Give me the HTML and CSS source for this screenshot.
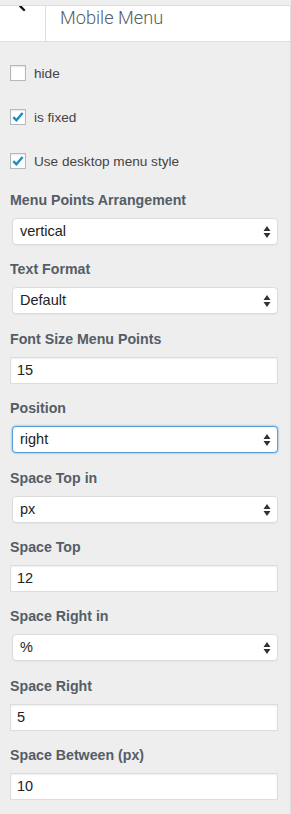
FILE: index.html
```html
<!DOCTYPE html>
<html>

<head>
    <meta charset="UTF-8">
    <title>Mobile Menu</title>
    <link rel="stylesheet" href="styles.css">
</head>

<body>
    <div class="panel">
        <div class="panel-head">
            <div class="back">
                <svg width="45" height="35" viewBox="0 0 45 35">
                    <path d="M20.5 0.5 L24 4" stroke="#111" stroke-width="2.4" stroke-linecap="round" fill="none" />
                </svg>
            </div>
            <div class="title">Mobile Menu</div>
        </div>

        <div class="controls">
            <label class="check-row">
                <span class="box"></span>
                hide
            </label>
            <label class="check-row">
                <span class="box">
                    <svg width="14" height="14" viewBox="0 0 14 14">
                        <path d="M2.3 7.2 L5.4 10.3 L11.6 3" stroke="#1e8cbe" stroke-width="2.4" fill="none" />
                    </svg>
                </span>
                is fixed
            </label>
            <label class="check-row">
                <span class="box">
                    <svg width="14" height="14" viewBox="0 0 14 14">
                        <path d="M2.3 7.2 L5.4 10.3 L11.6 3" stroke="#1e8cbe" stroke-width="2.4" fill="none" />
                    </svg>
                </span>
                Use desktop menu style
            </label>

            <div class="fields">
                <div class="field">
                    <span class="field-label">Menu Points Arrangement</span>
                    <div class="select">vertical<svg class="arrows" width="8" height="14" viewBox="0 0 8 14"><path d="M4 1 L7.5 6 L0.5 6 Z M4 13 L7.5 8 L0.5 8 Z" fill="#333" /></svg></div>
                </div>
                <div class="field">
                    <span class="field-label">Text Format</span>
                    <div class="select">Default<svg class="arrows" width="8" height="14" viewBox="0 0 8 14"><path d="M4 1 L7.5 6 L0.5 6 Z M4 13 L7.5 8 L0.5 8 Z" fill="#333" /></svg></div>
                </div>
                <div class="field">
                    <span class="field-label">Font Size Menu Points</span>
                    <div class="input">15</div>
                </div>
                <div class="field">
                    <span class="field-label">Position</span>
                    <div class="select focus">right<svg class="arrows" width="8" height="14" viewBox="0 0 8 14"><path d="M4 1 L7.5 6 L0.5 6 Z M4 13 L7.5 8 L0.5 8 Z" fill="#333" /></svg></div>
                </div>
                <div class="field">
                    <span class="field-label">Space Top in</span>
                    <div class="select">px<svg class="arrows" width="8" height="14" viewBox="0 0 8 14"><path d="M4 1 L7.5 6 L0.5 6 Z M4 13 L7.5 8 L0.5 8 Z" fill="#333" /></svg></div>
                </div>
                <div class="field">
                    <span class="field-label">Space Top</span>
                    <div class="input">12</div>
                </div>
                <div class="field">
                    <span class="field-label">Space Right in</span>
                    <div class="select">%<svg class="arrows" width="8" height="14" viewBox="0 0 8 14"><path d="M4 1 L7.5 6 L0.5 6 Z M4 13 L7.5 8 L0.5 8 Z" fill="#333" /></svg></div>
                </div>
                <div class="field">
                    <span class="field-label">Space Right</span>
                    <div class="input">5</div>
                </div>
                <div class="field">
                    <span class="field-label">Space Between (px)</span>
                    <div class="input">10</div>
                </div>
            </div>
        </div>
    </div>
</body>

</html>
```

FILE: styles.css
```css
html,
body {
    margin: 0;
    background-color: #eee;
}

body {
    font-family: "Liberation Sans", Arial, sans-serif;
    font-size: 13.6px;
    color: #555d66;
}

.panel {
    width: 290px;
    min-height: 814px;
    border-right: 1px solid #ddd;
}

.panel-head {
    display: flex;
    margin-top: 5px;
    height: 35px;
    background-color: #fff;
    border-top: 1px solid #ddd;
    border-bottom: 1px solid #ddd;
}

.back {
    width: 45px;
    border-right: 1px solid #ddd;
}

.back svg {
    display: block;
}

.title {
    padding-left: 14px;
    font-family: Roboto, "Liberation Sans", sans-serif;
    font-size: 18.2px;
    font-weight: 300;
    line-height: 20px;
    padding-top: 2px;
    color: #555d66;
}

.controls {
    padding: 23px 12px 0 10px;
}

.check-row {
    display: flex;
    align-items: center;
    height: 16px;
    margin-bottom: 28px;
    color: #444;
}

.box {
    box-sizing: border-box;
    width: 16px;
    height: 16px;
    margin-right: 8px;
    background-color: #fff;
    border: 1px solid #b4b9be;
    box-shadow: inset 0 1px 2px rgba(0, 0, 0, .1);
    display: flex;
    align-items: center;
    justify-content: center;
}

.box svg {
    display: block;
}

.fields {
    margin-top: -7px;
}

.field {
    margin-bottom: 14.4px;
}

.field-label {
    display: block;
    font-size: 14.2px;
    font-weight: bold;
    line-height: 20px;
    margin-bottom: 8px;
}

.select,
.input {
    box-sizing: border-box;
    position: relative;
    height: 27px;
    line-height: 25px;
    background-color: #fff;
    color: #222;
    font-size: 14.5px;
}

.select {
    margin-left: 2px;
    padding-left: 7px;
    border: 1px solid #dcdcdc;
    border-radius: 4px;
    box-shadow: 0 1px 1px rgba(0, 0, 0, .04);
}

.select.focus {
    border-color: #5b9dd9;
    box-shadow: 0 0 2px rgba(30, 140, 190, .8);
}

.arrows {
    position: absolute;
    right: 6px;
    top: 6px;
}

.input {
    padding-left: 6px;
    border: 1px solid #ddd;
    box-shadow: inset 0 1px 2px rgba(0, 0, 0, .07);
}
```
